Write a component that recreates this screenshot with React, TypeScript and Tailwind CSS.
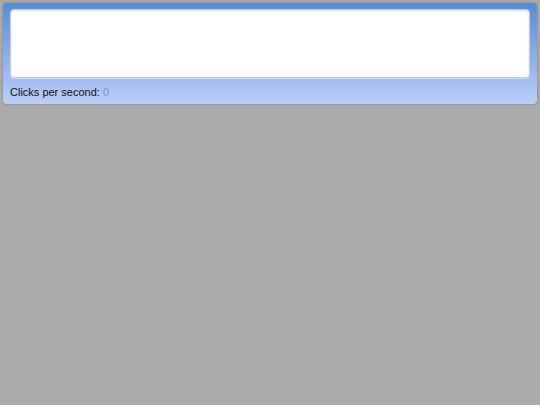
export default function App() {
  return (
    <div className="w-[540px] h-[405px] bg-[#aaaaaa] pt-[3px] px-[3px]" style={{ fontFamily: '"Liberation Sans", Arial, sans-serif' }}>
      <div className="rounded-[4px] bg-gradient-to-b from-[#5a8ad6] to-[#bbcef9] shadow-[0_0_2px_rgba(0,0,0,0.35)] px-[7px] pt-[6px] pb-[5px] flex flex-col">
        <div className="h-[69px] rounded-[4px] bg-white border border-[#c4c8d4] shadow-[inset_0_1px_2px_rgba(0,0,0,0.15),0_1px_1px_rgba(255,255,255,0.4)]" />
        <div className="mt-[7px] text-[11px] leading-[14px] text-[#111]">
          Clicks per second: <span className="text-[#8a94a6]">0</span>
        </div>
      </div>
    </div>
  );
}
